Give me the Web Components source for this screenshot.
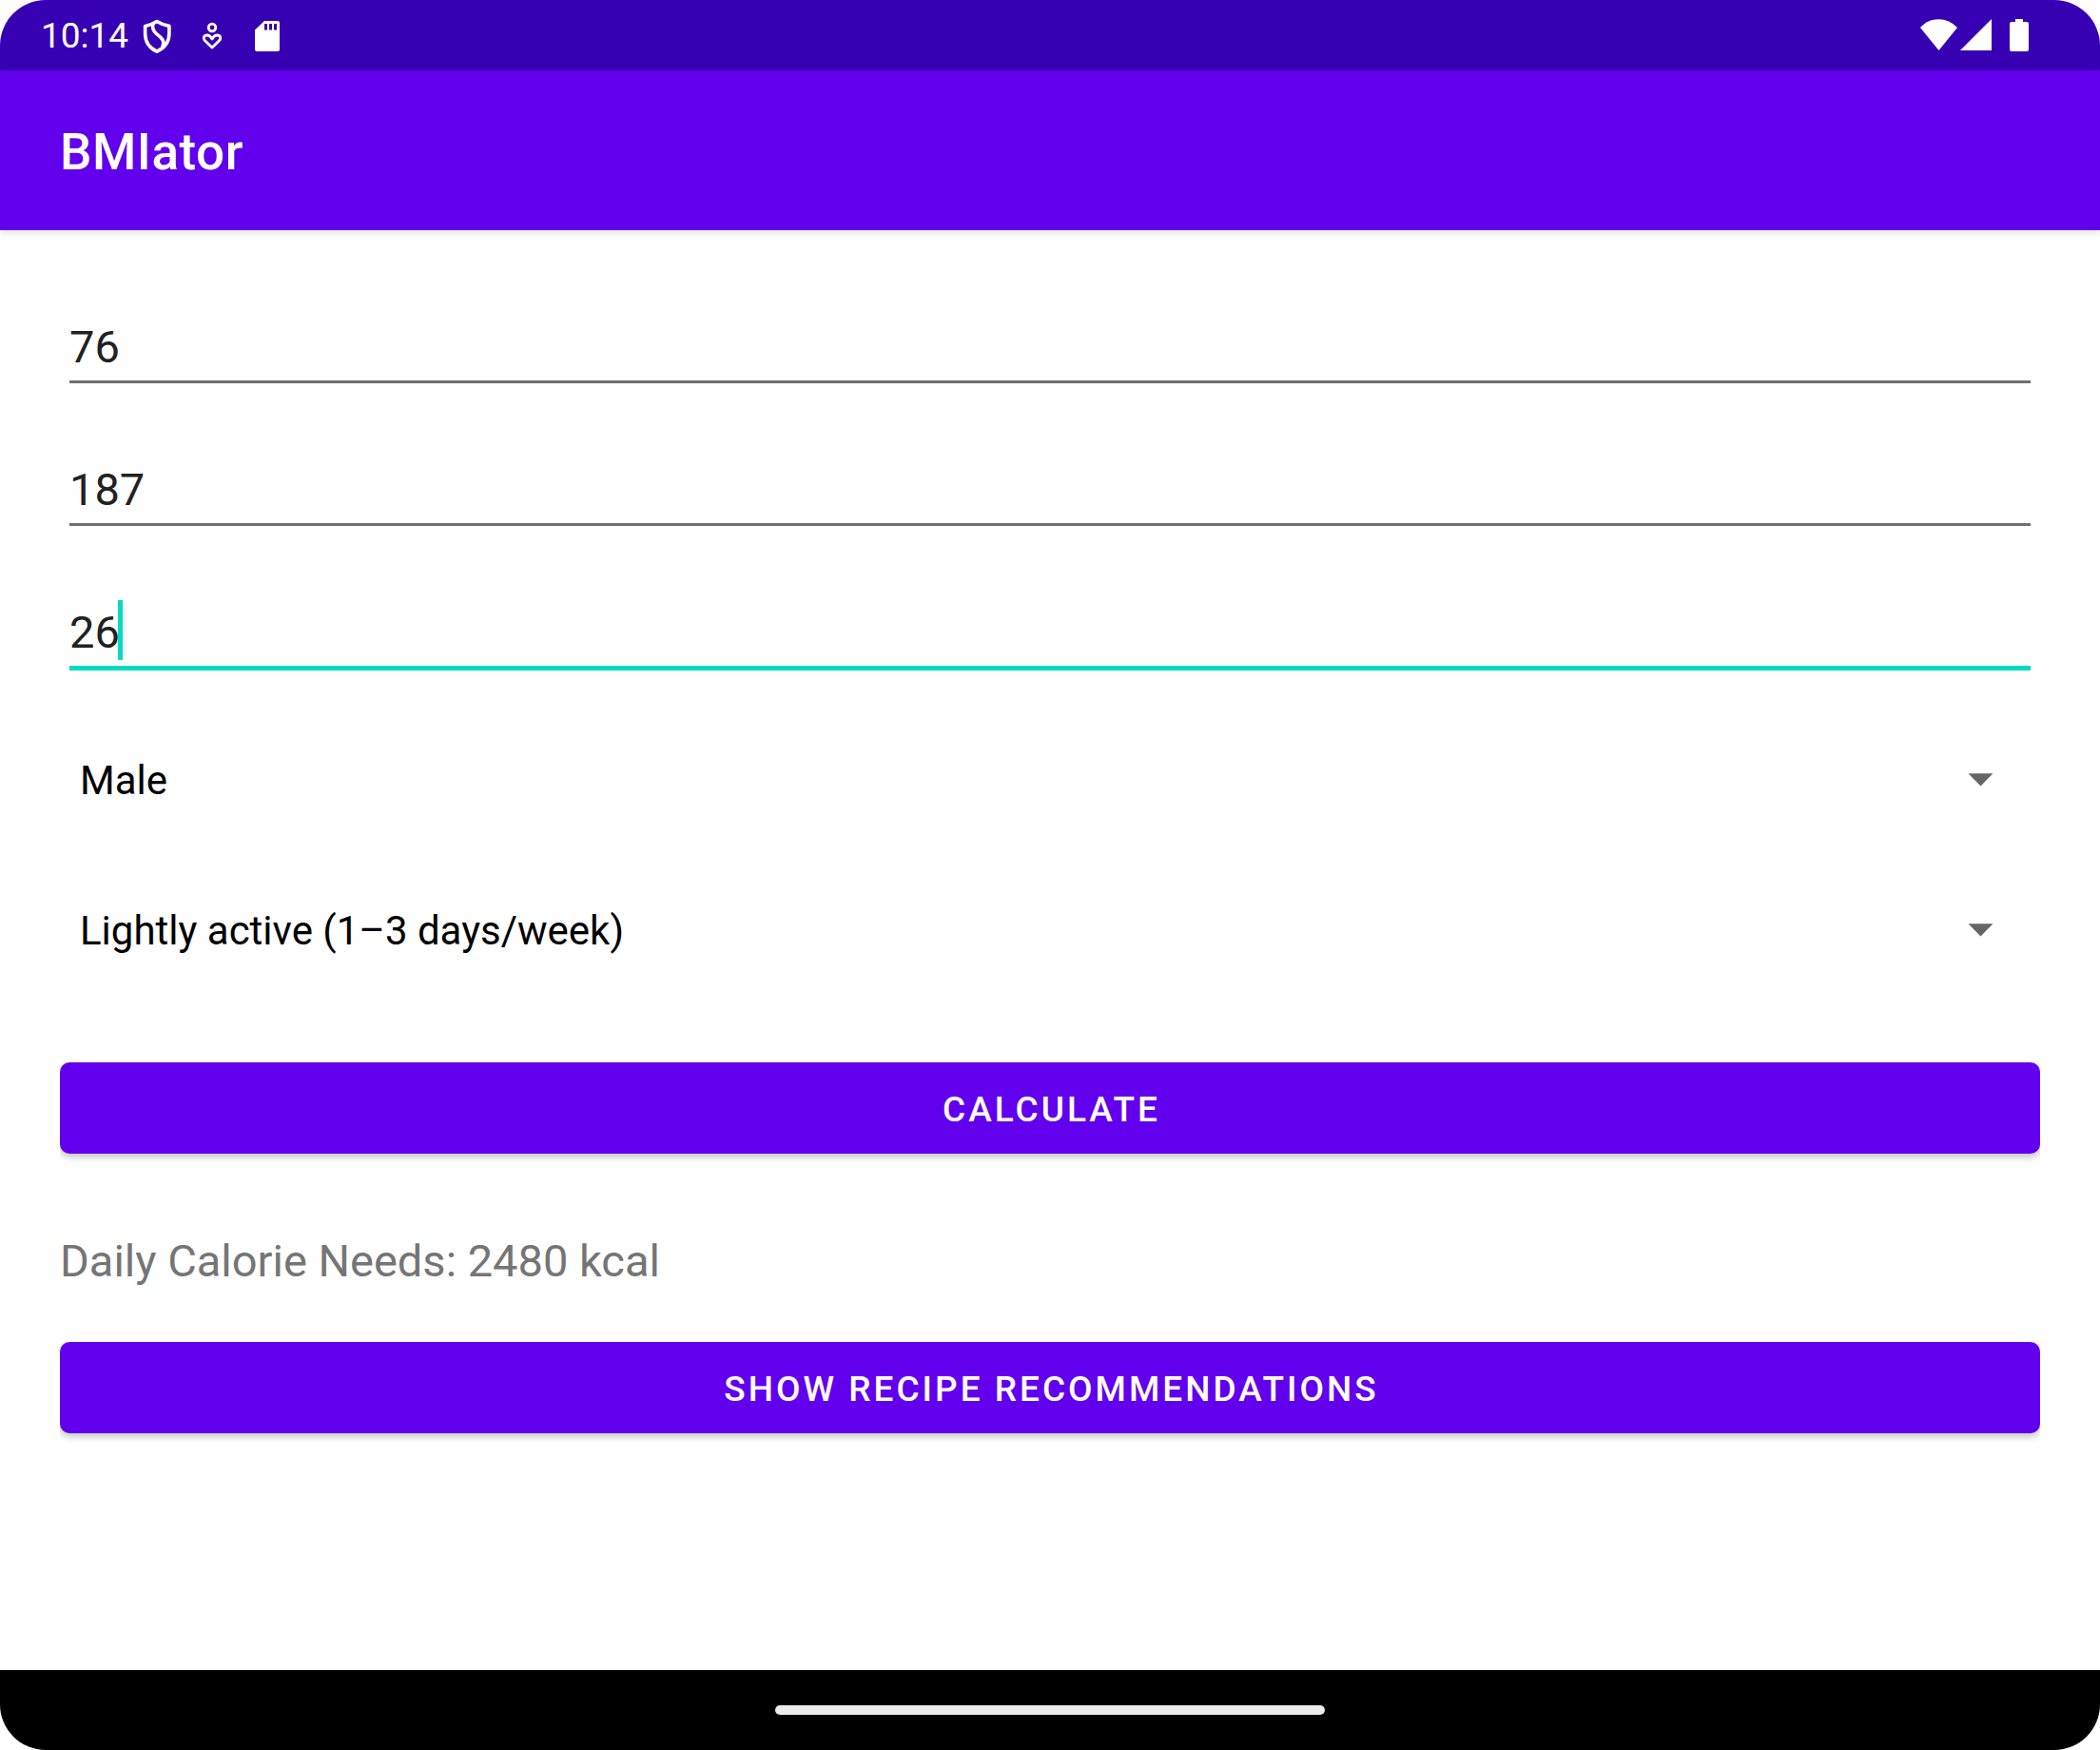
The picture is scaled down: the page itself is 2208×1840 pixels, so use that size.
<!DOCTYPE html>
<html lang="en">
<head>
<meta charset="utf-8">
<title>BMIator</title>
<style>
  html, body { margin: 0; min-height: 100%; background: #fff; }
  body { font-family: Roboto, "Liberation Sans", sans-serif; }
</style>
</head>
<body>
<bmi-screen>
  <status-bar slot="top" time="10:14"></status-bar>
  <app-bar slot="top">BMIator</app-bar>
  <text-field label="Weight in kilograms" value="76"></text-field>
  <text-field label="Height in centimetres" value="187"></text-field>
  <text-field label="Age" value="26" active></text-field>
  <drop-down class="first" label="Gender" options="Male|Female"></drop-down>
  <drop-down label="Activity level" options="Lightly active (1–3 days/week)"></drop-down>
  <action-button slot="actions">Calculate</action-button>
  <result-text slot="actions">Daily Calorie Needs: 2480 kcal</result-text>
  <action-button slot="actions">Show recipe recommendations</action-button>
  <nav-bar slot="bottom"></nav-bar>
</bmi-screen>

<script>
const define = (name, html, setup) => customElements.define(name, class extends HTMLElement {
  connectedCallback() {
    if (this.shadowRoot) return;
    const root = this.attachShadow({ mode: "open" });
    root.innerHTML = html;
    if (setup) setup(this, root);
  }
});

define("bmi-screen", `
  <style>
    :host { display: flex; flex-direction: column; min-height: 100vh; border-radius: 48px; overflow: hidden; background: #fff; }
    main { flex: 1; padding: 89px 63px 0; }
    .form, .actions { display: flex; flex-direction: column; }
    .actions { margin-top: 107px; }
    ::slotted(text-field) { margin: 0 10px 76px; }
    ::slotted(drop-down) { margin-top: 94px; }
    ::slotted(drop-down.first) { margin-top: 7px; }
    ::slotted(result-text) { margin: 85px 0 57px; }
  </style>
  <slot name="top"></slot>
  <main>
    <div class="form"><slot></slot></div>
    <div class="actions"><slot name="actions"></slot></div>
  </main>
  <slot name="bottom"></slot>`);

define("status-bar", `
  <style>
    :host { display: flex; justify-content: space-between; align-items: center; height: 74px; padding: 0 75px 0 43px; background: #3700b3; color: #fff; }
    div { display: flex; align-items: center; }
    time { width: 95px; margin-right: 12px; padding-top: 2px; font-size: 37px; line-height: 44px; }
    svg { display: block; height: 40px; }
    .care { margin: 0 34px 0 33px; }
    .signal { margin: 0 19px 0 3px; }
  </style>
  <div>
    <time></time>
    <svg width="30" viewBox="0 0 30 40" fill="none" stroke="#fff" stroke-width="3.6" stroke-linejoin="round">
      <path d="M15 5.6C11.5 7.9 7 9.6 2.6 10.4V18C2.600 27 7.500 33.700 15 37.200C22.500 33.700 27.900 27 27.900 18V10.400C23 9.600 18.500 7.900 15 5.600Z"/>
      <path d="M11 7.500C9.800 12.500 11.200 16 14.600 18.600C19 22 24.200 25.500 20.600 32.500"/>
    </svg>
    <svg class="care" width="20" viewBox="0 0 20 40" fill="none" stroke="#fff" stroke-width="2.800" stroke-linejoin="round">
      <circle cx="10" cy="12" r="3.800"/>
      <path d="M10 33L2.800 26C-.2 23 1.500 20 4.800 20C7.500 20 8.700 21.600 10 24C11.300 21.600 12.500 20 15.200 20C18.500 20 20.200 23 17.200 26Z"/>
    </svg>
    <svg width="28" viewBox="0 0 28 40" fill="#fff">
      <path fill-rule="evenodd" d="M11 5H25Q27 5 27 7V35Q27 37 25 37H3Q1 37 1 35V14.500ZM11 8V14.500H14V8ZM16 8V14.500H19V8ZM21 8V14.500H24V8Z"/>
    </svg>
  </div>
  <div>
    <svg width="39" viewBox="0 0 39 40" fill="#fff"><path d="M0 12Q8.500 3.200 19.500 3.200T39 12L19.500 36Z"/></svg>
    <svg class="signal" width="33" viewBox="0 0 33 40" fill="#fff"><path d="M33 3V36H0Z"/></svg>
    <svg width="20" viewBox="0 0 20 40" fill="#fff"><path d="M6 3H14V6H18Q20 6 20 8V35Q20 37 18 37H2Q0 37 0 35V8Q0 6 2 6H6Z"/></svg>
  </div>`, (host, root) => { root.querySelector("time").textContent = host.getAttribute("time"); });

define("app-bar", `
  <style>
    :host { display: flex; align-items: center; height: 168px; padding: 0 63px; background: #6200ee; color: #fff; box-shadow: 0 3px 7px rgba(0,0,0,.12); }
    h1 { margin: 0; padding-top: 4px; font-size: 53px; line-height: 62px; font-weight: 500; letter-spacing: .01em; }
  </style>
  <h1><slot></slot></h1>`);

define("text-field", `
  <style>
    :host { display: block; }
    label { display: flex; flex-direction: column; height: 74px; cursor: text; }
    .row { display: flex; align-items: flex-start; height: 67px; margin-bottom: 2px; }
    input { flex: 1; min-width: 0; height: 67px; margin: 0; padding: 0; border: 0; outline: 0; background: none; font-family: inherit; font-size: 47px; line-height: 67px; color: #212121; }
    .caret { display: none; width: 5px; height: 63px; margin-left: -2px; background: #03dac5; }
    .line { height: 3px; background: #707070; }
    :host([active]) input { flex: none; field-sizing: content; }
    :host([active]) .caret { display: block; }
    :host([active]) .line { height: 5px; background: #03dac5; }
  </style>
  <label><span class="row"><input type="text" inputmode="numeric"><span class="caret"></span></span><span class="line"></span></label>`,
  (host, root) => {
    const input = root.querySelector("input");
    input.value = host.getAttribute("value");
    input.setAttribute("aria-label", host.getAttribute("label"));
  });

define("drop-down", `
  <style>
    :host { display: grid; align-items: center; }
    select, svg { grid-area: 1 / 1; }
    select { appearance: none; width: 100%; height: 64px; margin: 0; padding: 0 84px 0 21px; border: 0; outline: 0; background: none; font-family: inherit; font-size: 42px; color: #000; }
    svg { justify-self: end; margin-right: 49px; pointer-events: none; }
  </style>
  <select></select>
  <svg width="27" height="14" viewBox="0 0 27 14" fill="#666"><path d="M.5 .3H26.500L13.500 13.500Z"/></svg>`,
  (host, root) => {
    const select = root.querySelector("select");
    select.setAttribute("aria-label", host.getAttribute("label"));
    for (const text of host.getAttribute("options").split("|")) select.add(new Option(text));
  });

define("action-button", `
  <style>
    :host { display: block; }
    button { display: block; width: 100%; height: 96px; margin: 0; padding: 4px 42px 0 45px; border: 0; border-radius: 10px; background: #6200ee; color: #fff; font-family: inherit; font-size: 37px; line-height: 44px; font-weight: 500; letter-spacing: 3px; text-transform: uppercase; box-shadow: 0 4px 7px rgba(0,0,0,.22); clip-path: inset(0 0 -14px 0); }
  </style>
  <button type="button"><slot></slot></button>`);

define("result-text", `
  <style>
    :host { display: block; }
    output { display: block; font-size: 47px; line-height: 56px; color: #757575; }
  </style>
  <output><slot></slot></output>`);

define("nav-bar", `
  <style>
    :host { display: flex; align-items: center; justify-content: center; height: 84px; background: #000; }
    span { width: 578px; height: 10px; border-radius: 5px; background: #ebebeb; }
  </style>
  <span></span>`);
</script>
</body>
</html>
